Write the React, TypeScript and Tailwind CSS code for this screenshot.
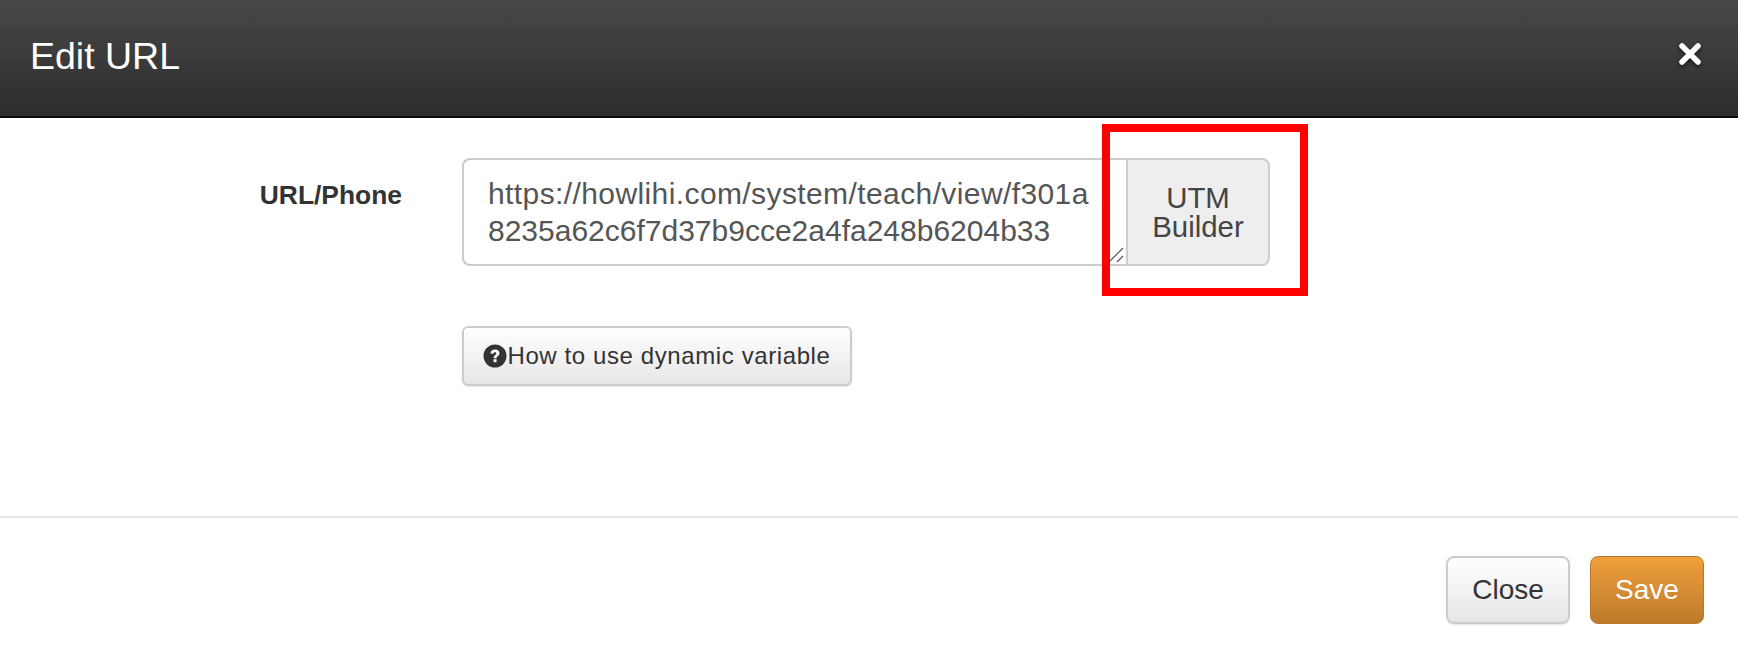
import React from 'react';

const App: React.FC = () => {
  return (
    <div className="relative w-[1738px] h-[658px] bg-white overflow-hidden font-['Liberation_Sans',sans-serif] text-[#333]">
      {/* Header */}
      <div className="h-[118px] flex items-center justify-between pl-[30px] pr-[36px] bg-gradient-to-b from-[#484848] to-[#2d2d2d] border-b-2 border-[#0c0c0c]">
        <h1 className="text-[37.5px] leading-none text-white mb-[2px]">Edit URL</h1>
        <button className="mb-[8px] drop-shadow-[0_2px_2px_rgba(0,0,0,0.6)]">
          <svg width="24" height="24" viewBox="0 0 24 24" className="block">
            <path d="M4 4 L20 20 M20 4 L4 20" stroke="#fff" strokeWidth="5.5" strokeLinecap="round" />
          </svg>
        </button>
      </div>

      {/* Body */}
      <div className="h-[400px] border-b-2 border-[#e5e5e5] pt-[40px]">
        <div className="flex">
          <label className="w-[402px] pt-[22px] text-right text-[26.4px] leading-[30px] font-bold">URL/Phone</label>
          <div className="ml-[60px]">
            <div className="flex h-[108px]">
              <div className="relative w-[664px] border-2 border-r-0 border-[#ccc] rounded-l-[8px] pl-[24px] pt-[15px] text-[30px] leading-[37px] text-[#555] whitespace-nowrap">
                <span className="tracking-[0.4px]">https://howlihi.com/system/teach/view/f301a</span>
                <br />
                8235a62c6f7d37b9cce2a4fa248b6204b33
                <svg width="16" height="16" viewBox="0 0 16 16" className="absolute right-[2px] bottom-[1px]">
                  <path d="M1 15 L15 1 M9 15 L15 9" stroke="#555" strokeWidth="1.2" />
                </svg>
              </div>
              <button className="w-[144px] border-2 border-[#ccc] rounded-r-[8px] bg-[#eee] text-[29.4px] leading-[29px] text-[#444]">
                UTM
                <br />
                Builder
              </button>
            </div>
            <button className="mt-[60px] h-[60px] w-[390px] flex items-center justify-center border-2 border-[#ccc] rounded-[6px] bg-gradient-to-b from-white to-[#e6e6e6] shadow-[0_1px_2px_rgba(0,0,0,0.1)] text-[24px] tracking-[0.6px]">
              <svg width="24" height="24" viewBox="0 0 24 24" className="shrink-0">
                <circle cx="12" cy="12" r="11.5" fill="#333" />
                <path d="M7.5 9.5 C7.5 6.8 9.7 5.5 12 5.5 C14.8 5.5 16.5 7.2 16.5 9.3 C16.5 12 13.6 12 13.6 14.2 L10.6 14.2 C10.6 11.2 13.4 11 13.4 9.5 C13.4 8.7 12.9 8.2 12 8.2 C11 8.2 10.5 8.8 10.4 9.8 Z" fill="#fff" />
                <rect x="10.6" y="15.2" width="3" height="3" fill="#fff" />
              </svg>
              How to use dynamic variable
            </button>
          </div>
        </div>
      </div>

      {/* Footer */}
      <div className="flex justify-end gap-[20px] pt-[38px] pr-[34px]">
        <button className="w-[124px] h-[68px] border-2 border-[#ccc] rounded-[8px] bg-gradient-to-b from-white to-[#e6e6e6] shadow-[0_1px_2px_rgba(0,0,0,0.1)] text-[28px] text-[#333]">
          Close
        </button>
        <button className="w-[114px] h-[68px] border border-[#b9772c] rounded-[8px] bg-gradient-to-b from-[#f0a03c] to-[#bd7a2c] text-[28px] text-white">
          Save
        </button>
      </div>

      {/* Red annotation box */}
      <div className="absolute left-[1102px] top-[124px] w-[206px] h-[172px] border-[8px] border-[#fe0000]" />
    </div>
  );
};

export default App;
